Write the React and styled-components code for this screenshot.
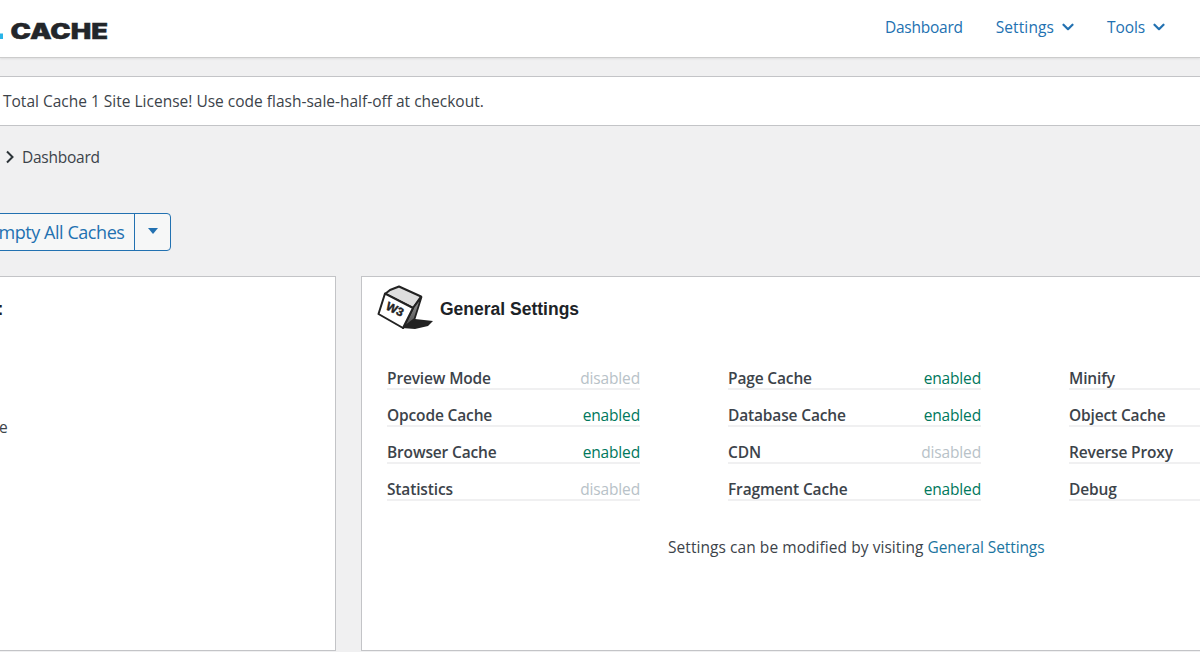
import React from "react";
import styled, { createGlobalStyle } from "styled-components";

const Global = createGlobalStyle`
  html, body { margin: 0; padding: 0; background: #f0f0f1; }
  body { width: 1200px; height: 652px; overflow: hidden; font-family: "Open Sans", "Noto Sans", sans-serif; }
  * { box-sizing: border-box; }
`;
const Page = styled.div`width: 1200px; height: 652px; overflow: hidden; background: #f0f0f1; color: #3c434a;`;
const Header = styled.header`
  height: 58px; background: #fff; border-bottom: 1px solid #ccc; box-shadow: 0 1px 2px rgba(0,0,0,.08);
  display: flex; align-items: center; justify-content: space-between; padding-right: 35px;
`;
const Logo = styled.svg`display: block; margin-left: -1px; margin-top: 0;`;
const Nav = styled.nav`display: flex; gap: 33px; align-items: center; margin-top: -3px;`;
const NavItem = styled.a`
  display: inline-flex; align-items: center; gap: 8px; color: #2271b1; font-size: 15.5px; letter-spacing: ${p => p.$track}px;
`;
const Notice = styled.div`
  margin-top: 18px; height: 50px; background: #fff; border: solid #c3c4c7; border-width: 1px 0;
  display: flex; align-items: center; padding-left: 3px; font-size: 15.5px; color: #3c434a;
`;
const Crumbs = styled.div`
  display: flex; align-items: center; gap: 7px; height: 20px; margin-top: 21px; padding-left: 5px; font-size: 15.5px; letter-spacing: -.25px;
`;
const SplitButton = styled.div`
  margin: 46px 0 25px -16px; width: 187px; height: 38px; display: flex; border: 1px solid #2271b1; border-radius: 0 4px 4px 0;
  background: #f6f7f7; color: #2271b1;
`;
const Main = styled.span`
  flex: 1; border-right: 1px solid #2271b1; display: flex; align-items: center; padding-left: 4px; font-size: 18px; letter-spacing: -.45px; white-space: nowrap;
`;
const Caret = styled.span`
  width: 35px; display: flex; align-items: center; justify-content: center;
  &::after { content: ""; border: solid transparent; border-width: 6px 5.5px 0; border-top-color: #2271b1; margin-top: -3px; }
`;
const Columns = styled.div`display: flex; gap: 25px; align-items: stretch; height: 375px;`;
const SidePanel = styled.section`
  flex: 0 0 336px; background: #fff; border: 1px solid #c3c4c7; border-left: 0; overflow: hidden;
`;
const SideTitle = styled.h2`
  margin: 22px 0 0 -73px; font: 700 17.6px "Liberation Sans", Arial, sans-serif; color: #1d2327; white-space: nowrap; height: 21px; line-height: 21px;
`;
const SideLine = styled.p`
  margin: 97px 0 0 -46px; font-size: 15.5px; white-space: nowrap; line-height: 20px;
`;
const Panel = styled.section`
  flex: 0 0 900px; background: #fff; border: 1px solid #c3c4c7; padding: 8px 0 0 14px;
`;
const PanelHead = styled.div`display: flex; align-items: center; gap: 6px; height: 48px;`;
const PanelTitle = styled.h2`margin: 0; font: 700 17.5px "Liberation Sans", Arial, sans-serif; color: #1d2327;`;
const Grid = styled.div`
  display: grid; grid-template-columns: repeat(3, 253px); column-gap: 88px; row-gap: 14px; margin: 34px 0 0 11px;
`;
const Row = styled.div`
  height: 23px; border-bottom: 2px solid #f0f0f1; display: flex; justify-content: space-between; align-items: flex-end; font-size: 15.5px; line-height: 19px;
`;
const Label = styled.span`font-weight: 600; color: #3c434a; letter-spacing: -.15px;`;
const Status = styled.span`color: ${p => (p.$on ? "#00785c" : "#b8c2c8")}; letter-spacing: -.15px;`;
const Note = styled.p`
  margin: 36px 0 0; width: 900px; padding-left: 292px; font-size: 15.5px; letter-spacing: .06px; line-height: 20px;
`;
const NoteLink = styled.a`color: #1b75a0; letter-spacing: -.1px;`;

const Chevron = ({ size = 12, color = "#2271b1", w = 2.2 }) => (
  <svg width={size} height={size} viewBox="0 0 12 12" fill="none" stroke={color} strokeWidth={w} strokeLinecap="round" strokeLinejoin="round" aria-hidden="true">
    <path d="M1.5 3.7 6 8.2l4.5-4.5" />
  </svg>
);
const Right = () => (
  <svg width="10" height="14" viewBox="0 0 10 14" fill="none" stroke="#2c3338" strokeWidth="2" aria-hidden="true">
    <path d="M2 1.500l5.500 5.500-5.500 5.500" />
  </svg>
);
const CacheLogo = () => (
  <Logo width="112" height="24" viewBox="0 0 112 24" role="img" aria-label="Total Cache">
    <rect x="-3" y="16.500" width="7" height="5.500" fill="#29b4e8" />
    <text x="11.500" y="21.500" textLength="97.500" lengthAdjust="spacingAndGlyphs" fontFamily="Inter, 'Liberation Sans', sans-serif" fontWeight="900" fontSize="21" fill="#23262a" stroke="#23262a" strokeWidth=".4">CACHE</text>
  </Logo>
);
const CubeIcon = () => (
  <svg width="58" height="48" viewBox="0 0 58 48" aria-hidden="true">
    <defs>
      <linearGradient id="side" x1="0" y1="0" x2="0" y2="1">
        <stop offset="0" stopColor="#9a9a9a" />
        <stop offset="1" stopColor="#4a4a4a" />
      </linearGradient>
    </defs>
    <path d="M26 43l13-9 18 2-5 5-13 3z" fill="#222" />
    <path d="M9 9 14 5 23 1.500 45 11.500 37 23z" fill="#dedede" stroke="#222" strokeWidth="2" strokeLinejoin="round" />
    <path d="M37 23 45.500 12 38.500 34 27 43z" fill="url(#side)" stroke="#222" strokeWidth="1.800" strokeLinejoin="round" />
    <path d="M9 8.500 37 23 27 43 2.500 29z" fill="#fff" stroke="#222" strokeWidth="2" strokeLinejoin="round" />
    <text x="0" y="0" transform="translate(9 24) rotate(26)" fontFamily="'Liberation Sans', sans-serif" fontWeight="700" fontSize="12" fill="#222" stroke="#222" strokeWidth=".4">W3</text>
  </svg>
);

const items = [
  ["Preview Mode", false], ["Page Cache", true], ["Minify", true],
  ["Opcode Cache", true], ["Database Cache", true], ["Object Cache", true],
  ["Browser Cache", true], ["CDN", false], ["Reverse Proxy", false],
  ["Statistics", false], ["Fragment Cache", true], ["Debug", false],
];

export default function App() {
  return (
    <Page>
      <Global />
      <Header>
        <CacheLogo />
        <Nav>
          <NavItem $track={-0.25}>Dashboard</NavItem>
          <NavItem $track={0.1}>Settings <Chevron /></NavItem>
          <NavItem $track={-0.1}>Tools <Chevron /></NavItem>
        </Nav>
      </Header>
      <Notice>Total Cache 1 Site License! Use code flash-sale-half-off at checkout.</Notice>
      <Crumbs><Right />Dashboard</Crumbs>
      <SplitButton><Main>Empty All Caches</Main><Caret /></SplitButton>
      <Columns>
        <SidePanel>
          <SideTitle>Account:</SideTitle>
          <SideLine>License</SideLine>
        </SidePanel>
        <Panel>
          <PanelHead><CubeIcon /><PanelTitle>General Settings</PanelTitle></PanelHead>
          <Grid>
            {items.map(([name, on]) => (
              <Row key={name}>
                <Label>{name}</Label>
                <Status $on={on}>{on ? "enabled" : "disabled"}</Status>
              </Row>
            ))}
          </Grid>
          <Note>Settings can be modified by visiting <NoteLink>General Settings</NoteLink></Note>
        </Panel>
      </Columns>
    </Page>
  );
}
